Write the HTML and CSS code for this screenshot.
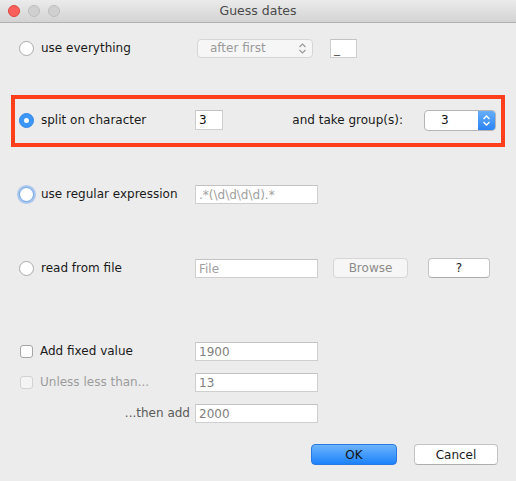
FILE: index.html
```html
<!DOCTYPE html>
<html>
<head>
<meta charset="utf-8">
<link rel="stylesheet" href="styles.css">
</head>
<body>
<div class="window">
  <div class="titlebar">
    <div class="lights">
      <span class="light red"></span>
      <span class="light grey"></span>
      <span class="light grey"></span>
    </div>
    <div class="title">Guess dates</div>
  </div>
  <div class="content">
    <div class="row r1">
      <div class="lab"><span class="radio"></span><span>use everything</span></div>
      <div class="select dis">
        <span>after first</span>
        <svg class="chev" width="9" height="13" viewBox="0 0 9 13"><path d="M1.5 5 L4.5 2 L7.5 5 M1.5 8 L4.5 11 L7.5 8" fill="none" stroke="#9a9a9a" stroke-width="1.2"/></svg>
      </div>
      <div class="field tiny">_</div>
    </div>

    <div class="redbox">
      <div class="row">
        <div class="lab"><span class="radio on"></span><span>split on character</span></div>
        <div class="field small dark">3</div>
        <div class="grow"></div>
        <span class="take">and take group(s):</span>
        <div class="select blue">
          <span class="val">3</span>
          <span class="stepper">
            <svg width="9" height="13" viewBox="0 0 9 13"><path d="M1.5 5 L4.5 2 L7.5 5 M1.5 8 L4.5 11 L7.5 8" fill="none" stroke="#fff" stroke-width="1.3"/></svg>
          </span>
        </div>
      </div>
    </div>

    <div class="row r3">
      <div class="lab"><span class="radio focus"></span><span>use regular expression</span></div>
      <div class="field wide">.*(\d\d\d\d).*</div>
    </div>

    <div class="row r4">
      <div class="lab"><span class="radio"></span><span>read from file</span></div>
      <div class="field wide">File</div>
      <div class="btn browse">Browse</div>
      <div class="btn q">?</div>
    </div>

    <div class="row r5">
      <div class="lab"><span class="check"></span><span>Add fixed value</span></div>
      <div class="field wide val">1900</div>
    </div>
    <div class="row r6">
      <div class="lab disabled"><span class="check dis"></span><span>Unless less than...</span></div>
      <div class="field wide val">13</div>
    </div>
    <div class="row r7">
      <div class="lab right"><span>...then add</span></div>
      <div class="field wide val">2000</div>
    </div>

    <div class="buttons">
      <div class="btn ok">OK</div>
      <div class="btn cancel">Cancel</div>
    </div>
  </div>
</div>
</body>
</html>
```

FILE: styles.css
```css
* { box-sizing: border-box; }
html, body { margin: 0; padding: 0; }
body {
  width: 516px;
  height: 481px;
  background: #ececec;
  font-family: "DejaVu Sans", "Liberation Sans", sans-serif;
  font-size: 12px;
  color: #1a1a1a;
  overflow: hidden;
}
.window { width: 516px; height: 481px; background: #ececec; }
.titlebar {
  height: 23px;
  background: linear-gradient(#ebebeb, #d3d3d3);
  border-bottom: 1px solid #b1b1b1;
  display: flex;
  align-items: center;
  position: relative;
}
.lights { display: flex; gap: 8px; padding-left: 8px; }
.light { width: 12px; height: 12px; border-radius: 50%; display: block; }
.light.red { background: #fc605c; border: 1px solid #e0443e; }
.light.grey { background: #d0d0d0; border: 1px solid #bdbdbd; }
.title {
  position: absolute;
  left: 0; right: 0; top: 0;
  line-height: 22px;
  text-align: center;
  font-size: 12.5px;
  color: #4a4a4a;
}
.content { padding-left: 19px; }
.row { display: flex; align-items: center; height: 20px; }
.lab { width: 176px; display: flex; align-items: center; gap: 7px; white-space: nowrap; }
.lab.disabled { color: #9c9c9c; }
.lab.right { justify-content: flex-end; padding-right: 5px; color: #5a5a5a; }
.radio {
  width: 15px; height: 15px; border-radius: 50%;
  background: #fff; border: 1px solid #a9a9a9;
  display: inline-block; flex: none;
}
.radio.on {
  background: #3b96f7; border-color: #3289ea;
  position: relative;
}
.radio.on::after {
  content: ""; position: absolute; left: 4px; top: 4px;
  width: 5px; height: 5px; border-radius: 50%; background: #fff;
}
.radio.focus {
  border-color: #6aa3ea;
  box-shadow: 0 0 0 2px rgba(120,170,240,0.55);
}
.check {
  width: 13px; height: 13px; border-radius: 3px;
  background: #fff; border: 1px solid #a5a5a5;
  display: inline-block; flex: none; margin-left: 1px;
}
.check.dis { background: #f4f4f4; border-color: #d2d2d2; }
.field {
  height: 19px; background: #fff; border: 1px solid #cfcfcf;
  border-top-color: #c2c2c2;
  font-size: 12px; color: #a0a0a0; padding: 1px 3px 0;
  line-height: 16px; white-space: nowrap;
}
.field.wide { width: 123px; }
.field.val { color: #808080; }
.field.tiny { width: 27px; margin-left: 17px; color: #555; }
.field.small { width: 28px; height: 20px; line-height: 17px; }
.field.dark { color: #111; }
.select {
  height: 19px; border-radius: 4px; display: flex; align-items: center;
}
.select.dis {
  margin-left: 2px; width: 116px;
  background: #f6f6f6; border: 1px solid #d6d6d6;
  color: #9a9a9a; padding-left: 12px; justify-content: space-between; padding-right: 5px;
}
.grow { flex: 1; }
.take { margin-right: 21px; }
.select.blue {
  width: 72px; height: 21px; background: #fff; border: 1px solid #b5b5b5;
  overflow: hidden; margin-right: 5px;
}
.select.blue .val { flex: 1; padding-left: 16px; color: #111; }
.select.blue .stepper {
  width: 17px; height: 100%;
  background: linear-gradient(#67aefa, #2b84f5);
  display: flex; align-items: center; justify-content: center;
}
.redbox {
  margin-left: -8px; margin-top: 37px; width: 494px; height: 52px;
  border: 4px solid #fd3f1c;
  padding: 11px 0 0 4px;
}
.r1 { margin-top: 15px; }
.r3 { margin-top: 37px; }
.r4 { margin-top: 54px; }
.r5 { margin-top: 63px; }
.r6 { margin-top: 11px; }
.r7 { margin-top: 11px; }
.btn {
  height: 20px; border-radius: 4px; display: flex; align-items: center; justify-content: center;
  background: #fff; border: 1px solid #c3c3c3; border-bottom-color: #aeaeae;
}
.btn.browse {
  margin-left: 15px; width: 75px; background: #f6f6f6; border-color: #d6d6d6; color: #8c8c8c;
}
.btn.q { margin-left: 20px; width: 62px; }
.buttons {
  display: flex; justify-content: flex-end; gap: 17px; padding-right: 18px; margin-top: 21px;
}
.btn.ok {
  width: 86px; height: 21px;
  background: linear-gradient(#6db4fb, #1c82fb);
  border-color: #2a79e3; color: #111;
}
.btn.cancel { width: 84px; height: 21px; }
```
